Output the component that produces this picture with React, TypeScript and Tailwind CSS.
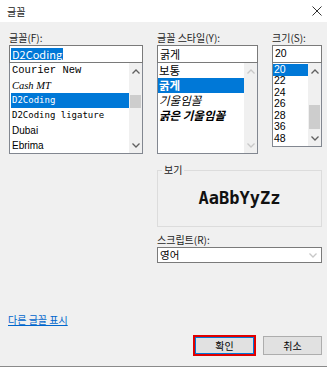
import React from "react"

const fonts = [
  { name: "Courier New", cls: "font-['Liberation_Mono',monospace] text-[10.5px]" },
  { name: "Cash MT", cls: "font-['Liberation_Serif',serif] italic text-[10.5px]" },
  { name: "D2Coding", cls: "font-['DejaVu_Sans_Mono',monospace] text-[9px]", selected: true },
  { name: "D2Coding ligature", cls: "font-['DejaVu_Sans_Mono',monospace] text-[9px]" },
  { name: "Dubai", cls: "font-['Liberation_Sans',sans-serif] text-[10px]" },
  { name: "Ebrima", cls: "font-['Liberation_Sans',sans-serif] text-[10px]" },
]

const styles = [
  { name: "보통", cls: "" },
  { name: "굵게", cls: "font-bold", selected: true },
  { name: "기울임꼴", cls: "italic" },
  { name: "굵은 기울임꼴", cls: "font-bold italic" },
]

const sizes = ["20", "22", "24", "26", "28", "36", "48"]

function Chevron({ up, light }: { up?: boolean; light?: boolean }) {
  return (
    <svg width="8" height="5" viewBox="0 0 8 5" className={light ? "text-[#c8c8c8]" : "text-[#606060]"}>
      <polyline
        points={up ? "0.5,4.5 4,1 7.5,4.5" : "0.5,0.5 4,4 7.5,0.5"}
        fill="none"
        stroke="currentColor"
        strokeWidth="1.3"
      />
    </svg>
  )
}

function Scrollbar({ thumbTop, thumbHeight, disabled }: { thumbTop?: string; thumbHeight?: string; disabled?: boolean }) {
  return (
    <div className="flex w-[13px] flex-col items-center bg-[#f0f0f0]">
      <div className="flex h-[16px] w-full items-center justify-center">
        <Chevron up light={disabled} />
      </div>
      <div className="relative w-full flex-1">
        {!disabled && (
          <div className={`mx-auto w-[11px] bg-[#cdcdcd] ${thumbTop} ${thumbHeight}`} />
        )}
      </div>
      <div className="flex h-[15px] w-full items-center justify-center">
        <Chevron light={disabled} />
      </div>
    </div>
  )
}

function Label({ children }: { children: React.ReactNode }) {
  return <div className="h-[14px] whitespace-nowrap text-[10px] leading-[14px] text-[#1e1e1e]">{children}</div>
}

export default function App() {
  return (
    <div className="flex h-[367px] w-[327px] flex-col overflow-hidden border-b border-[#8a8a8a] bg-[#f0f0f0] font-['Noto_Sans_CJK_KR',sans-serif] text-black">
      <div className="flex h-[22px] items-center justify-between bg-white pl-[7px] pr-[5px]">
        <span className="text-[10px] text-[#222]">글꼴</span>
        <svg width="10" height="10" viewBox="0 0 10 10" className="text-[#333]">
          <path d="M0.5 0.5 L9.5 9.5 M9.5 0.5 L0.5 9.5" stroke="currentColor" strokeWidth="1" />
        </svg>
      </div>

      <div className="flex flex-1 flex-col pl-[9px] pr-[5px] pt-[9px]">
        <div className="flex gap-[14px]">
          <div className="flex w-[134px] flex-col">
            <Label>글꼴(F):</Label>
            <div className="flex h-[18px] items-center border border-[#7a7a7a] bg-white pl-px">
              <span className="bg-[#0078d7] px-px text-[11px] leading-[12px] text-white">D2Coding</span>
            </div>
            <div className="flex h-[91px] border border-t-0 border-[#828790] bg-white">
              <div className="flex flex-1 flex-col pl-px">
                {fonts.map(f => (
                  <div
                    key={f.name}
                    className={`flex h-[15px] items-center whitespace-nowrap pl-px ${f.cls} ${f.selected ? "bg-[#0078d7] text-white" : ""}`}
                  >
                    {f.name}
                  </div>
                ))}
              </div>
              <Scrollbar thumbTop="mt-[16px]" thumbHeight="h-[13px]" />
            </div>
          </div>

          <div className="flex w-[101px] flex-col">
            <Label>글꼴 스타일(Y):</Label>
            <div className="flex h-[18px] items-center border border-[#7a7a7a] bg-white pl-[2px] text-[11px]">
              굵게
            </div>
            <div className="flex h-[91px] border border-t-0 border-[#828790] bg-white">
              <div className="flex flex-1 flex-col">
                {styles.map(s => (
                  <div
                    key={s.name}
                    className={`flex h-[15px] items-center whitespace-nowrap pl-px text-[11.5px] ${s.cls} ${s.selected ? "bg-[#0078d7] text-white" : ""}`}
                  >
                    {s.name}
                  </div>
                ))}
              </div>
              <Scrollbar disabled />
            </div>
          </div>

          <div className="flex w-[50px] flex-col">
            <Label>크기(S):</Label>
            <div className="flex h-[18px] items-center border border-[#7a7a7a] bg-white pl-[2px] font-['Liberation_Sans',sans-serif] text-[10.5px]">
              20
            </div>
            <div className="flex h-[84px] border border-t-0 border-[#828790] bg-white">
              <div className="flex flex-1 flex-col pt-px">
                {sizes.map((s, i) => (
                  <div
                    key={s}
                    className={`flex h-[11.5px] items-center pl-px font-['Liberation_Sans',sans-serif] text-[10.5px] ${i === 0 ? "bg-[#0078d7] text-white" : ""}`}
                  >
                    {s}
                  </div>
                ))}
              </div>
              <Scrollbar thumbTop="mt-[26px]" thumbHeight="h-[24px]" />
            </div>
          </div>
        </div>

        <div className="ml-[148px] flex w-[165px] flex-col">
          <div className="relative mt-[16px] flex h-[57px] items-center justify-center border border-[#dcdcdc]">
            <span className="absolute -top-[8px] left-[4px] bg-[#f0f0f0] px-[2px] text-[10px] leading-[14px] text-[#222]">
              보기
            </span>
            <span className="font-['DejaVu_Sans_Mono',monospace] text-[17px] font-bold text-[#111]">AaBbYyZz</span>
          </div>
          <div className="mt-[6px]">
            <Label>스크립트(R):</Label>
          </div>
          <div className="flex h-[16px] items-center justify-between border border-[#7a7a7a] bg-white pl-[2px] pr-[4px] text-[10.5px]">
            <span>영어</span>
            <Chevron light />
          </div>
        </div>

        <a href="#" className="ml-[-1px] mt-[50px] h-[14px] w-fit text-[10px] leading-[14px] text-[#0066cc] underline">
          다른 글꼴 표시
        </a>

        <div className="mt-[8px] flex items-center justify-end gap-[7px]">
          <button className="flex h-[21px] w-[63px] items-center justify-center border-2 border-[#e00000] bg-[#e1e1e1] text-[10px] shadow-[inset_0_0_0_1px_#0078d7]">
            확인
          </button>
          <button className="flex h-[19px] w-[59px] items-center justify-center border border-[#adadad] bg-[#e1e1e1] text-[10px]">
            취소
          </button>
        </div>
      </div>
    </div>
  )
}
